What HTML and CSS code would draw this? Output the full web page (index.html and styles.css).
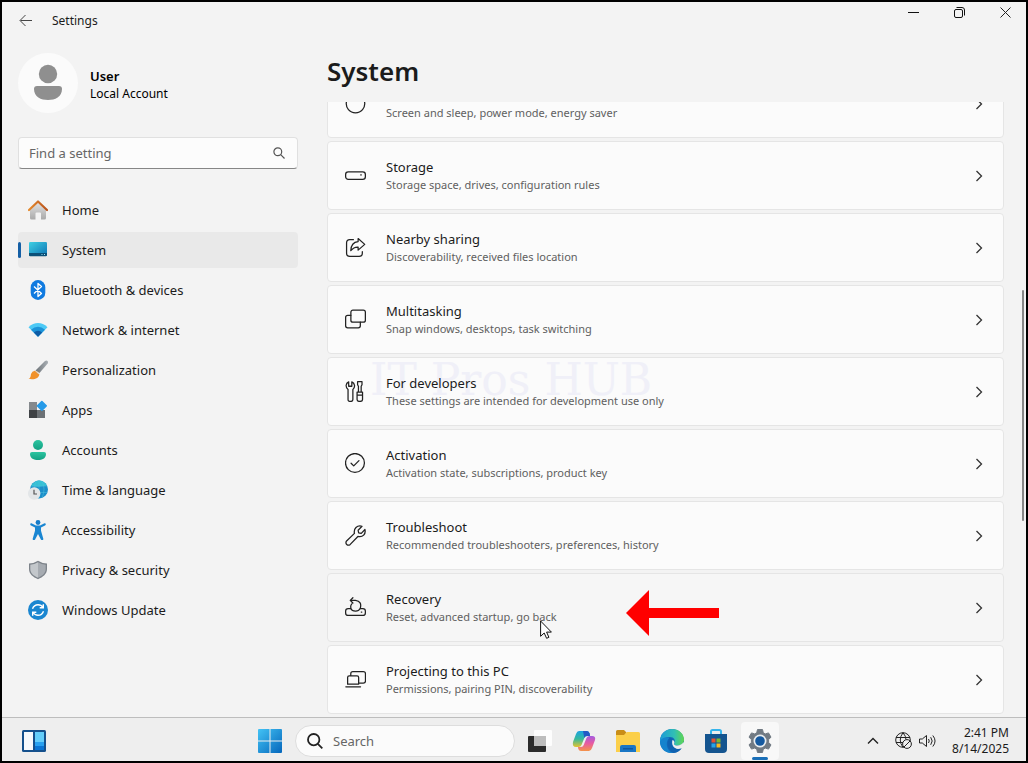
FILE: index.html
```html
<!DOCTYPE html>
<html lang="en">
<head>
    <meta charset="UTF-8">
    <meta name="viewport" content="width=device-width, initial-scale=1.0">
    <title>Settings</title>
    <link rel="stylesheet" href="styles.css">
</head>
<body>
    <div class="window">
        <header class="titlebar">
            <button class="back-btn" aria-label="Back">
                <svg width="14" height="14" viewBox="0 0 14 14" fill="none" stroke="#444"><path d="M13 6.500H1.500M6.500 1 1 6.500 6.500 12"/></svg>
            </button>
            <span class="app-name">Settings</span>
            <div class="window-controls">
                <button aria-label="Minimize">
                    <svg width="11" height="11" viewBox="0 0 11 11" fill="none" stroke="#111"><path d="M0 5.500h11"/></svg>
                </button>
                <button aria-label="Restore">
                    <svg width="11" height="11" viewBox="0 0 11 11" fill="none" stroke="#111"><rect x=".5" y="2.500" width="8" height="8" rx="1.500"/><path d="M2.500.5h5.500a2.500 2.500 0 0 1 2.500 2.500v5.500"/></svg>
                </button>
                <button aria-label="Close">
                    <svg width="11" height="11" viewBox="0 0 11 11" fill="none" stroke="#222"><path d="M.5.5l10 10M10.500.5l-10 10"/></svg>
                </button>
            </div>
        </header>

        <div class="content">
            <aside class="sidebar">
                <div class="account">
                    <svg class="avatar" viewBox="0 0 60 60"><circle cx="30" cy="30" r="30" fill="#fbfbfb"/><circle cx="30" cy="21" r="9.200" fill="#8f8f8f"/><path d="M19 33h22q3 0 3 3c0 8-7 11-14 11s-14-3-14-11q0-3 3-3z" fill="#8f8f8f"/></svg>
                    <div class="account-text">
                        <div class="account-name">User</div>
                        <div class="account-type">Local Account</div>
                    </div>
                </div>

                <div class="search-box">
                    <input type="search" placeholder="Find a setting" aria-label="Find a setting">
                    <svg width="12" height="12" viewBox="0 0 12 12" fill="none" stroke="#555" stroke-width="1.200"><circle cx="4.800" cy="4.800" r="3.900"/><path d="M7.700 7.700l3.800 3.800"/></svg>
                </div>

                <nav class="nav">
                    <a href="#home">
                        <svg viewBox="0 0 20 20"><defs><linearGradient id="wall" x2="0" y2="1"><stop stop-color="#e4e4e4"/><stop offset="1" stop-color="#a9a9a9"/></linearGradient><linearGradient id="roof"><stop stop-color="#e58a2c"/><stop offset="1" stop-color="#b9531c"/></linearGradient></defs><path d="M2 8.500 10 2l8 6.500V18q0 1.500-1.500 1.500H13v-6q0-1-1-1H8.500q-1 0-1 1v6h-4Q2 19.500 2 18z" fill="url(#wall)"/><path d="M1 10 10 1.500l9 8.500" fill="none" stroke="url(#roof)" stroke-width="2.200" stroke-linecap="round" stroke-linejoin="round"/></svg>
                        Home
                    </a>
                    <a href="#system" class="active" aria-current="page">
                        <svg viewBox="0 0 20 20"><defs><linearGradient id="screen" x2="1" y2="1"><stop stop-color="#3fd0e3"/><stop offset="1" stop-color="#0c73b4"/></linearGradient></defs><rect x="1" y="2" width="18" height="14" rx="1.200" fill="url(#screen)"/><path d="M1 13h18v2q0 1.200-1.200 1.200H2.200Q1 16.200 1 15z" fill="#0b5078"/><path d="M13.500 14.500h1m1.500 0h1" stroke="#9fe2f5"/></svg>
                        System
                    </a>
                    <a href="#bluetooth">
                        <svg viewBox="0 0 20 20"><rect x="2.700" width="14.600" height="20" rx="7.300" fill="#0f7ae0"/><path d="M6 6.500l7.500 7L10 16.500v-13l3.500 3L6 13.500" fill="none" stroke="#fff" stroke-width="1.300" stroke-linejoin="round"/></svg>
                        Bluetooth &amp; devices
                    </a>
                    <a href="#network">
                        <svg viewBox="0 0 20 20"><path d="M.5 7.200Q5 3 10 3t9.500 4.200L10 16.800z" fill="#4cc9f5"/><path d="M3 9.700q3.200-3 7-3t7 3l-7 7.100z" fill="#1c93d8"/><path d="M5.800 12.500q4.200-3.600 8.400 0L10 16.800z" fill="#0d5ba5"/></svg>
                        Network &amp; internet
                    </a>
                    <a href="#personalization">
                        <svg viewBox="0 0 20 20"><defs><linearGradient id="handle"><stop stop-color="#6d7378"/><stop offset="1" stop-color="#a9afb4"/></linearGradient></defs><path d="M7.500 10.500 17 1q1.500-1 2.500 0t.2 2.400L11.500 13z" fill="url(#handle)"/><path d="M6.800 10.800q3.700.3 4.500 3.400c0 4-5.500 6-10.800 4.600 2.500-1 2-2.800 2.500-4.800q1-3 3.800-3.200z" fill="#f0912a"/><path d="M7.500 10.500l4 2.700-.8 1-3.900-3.400z" fill="#d9dcde"/></svg>
                        Personalization
                    </a>
                    <a href="#apps">
                        <svg viewBox="0 0 20 20"><path d="M1 2h8v8.500H1z" fill="#85898d"/><path d="M1 10h8v8H1z" fill="#3f4245"/><path d="M9 10h8v8H9z" fill="#6c7175"/><rect x="10" y="2" width="7.700" height="7.700" rx=".8" fill="#259ae8" transform="rotate(45 13.850 5.850)"/></svg>
                        Apps
                    </a>
                    <a href="#accounts">
                        <svg viewBox="0 0 20 20"><defs><linearGradient id="person" x2="0" y2="1"><stop stop-color="#2cc4a0"/><stop offset="1" stop-color="#13a183"/></linearGradient></defs><circle cx="10" cy="5" r="5" fill="url(#person)"/><path d="M4 12h12q2 0 2 2c0 4.500-4 6-8 6s-8-1.500-8-6q0-2 2-2z" fill="url(#person)"/></svg>
                        Accounts
                    </a>
                    <a href="#time">
                        <svg viewBox="0 0 20 20"><circle cx="11" cy="9.500" r="9" fill="#1b8ec9"/><path d="M3 6q3.500-5.500 8-5.500 5 0 8 5-8 2-16 .5z" fill="#35c0d4"/><path d="M11 .5v18M3 6h16M8 1.200Q5 9 9 17M14 1q4 8 0 17M3 12.500h16" fill="none" stroke="#4fc0dd" stroke-width=".5"/><circle cx="6.200" cy="13.500" r="6.200" fill="#e3e6e8"/><path d="M6 9.800v4.200h3" fill="none" stroke="#555" stroke-width="1.200"/></svg>
                        Time &amp; language
                    </a>
                    <a href="#accessibility">
                        <svg viewBox="0 0 20 20"><circle cx="10" cy="2.500" r="2.400" fill="#157cc9"/><path d="M3.500 3.300 8 5.500h4l4.500-2.200q1.300-.2 1.300 1 0 .7-.8 1.100l-4 2.100v3.200l2.300 8q.1 1.300-1 1.500-1 .1-1.400-.8L10 14l-2.900 5.400q-.5.900-1.400.8-1.100-.2-1-1.500l2.300-8V7.500l-4-2.100q-.8-.4-.8-1.100 0-1.200 1.300-1z" fill="#1a86d2"/></svg>
                        Accessibility
                    </a>
                    <a href="#privacy">
                        <svg viewBox="0 0 20 20"><path d="M10 .8q4 2.700 9 2.700V9c0 5-4 8-9 10.200C5 17 1 14 1 9V3.500q5 0 9-2.700z" fill="#7d838a"/><path d="M10 2.300q3.500 2.200 7.700 2.400V9c0 4-3.200 6.800-7.700 8.700z" fill="#a6abb1"/><path d="M10 2.300Q6.500 4.500 2.300 4.700V9c0 4 3.200 6.800 7.700 8.700z" fill="#c3c7cb"/></svg>
                        Privacy &amp; security
                    </a>
                    <a href="#update">
                        <svg viewBox="0 0 20 20"><circle cx="10" cy="10" r="10" fill="#1a86d0"/><path d="M4.500 8.800Q6 4.700 10 4.700q3.300 0 5 2.800M15.500 11.200q-1.500 4.100-5.500 4.100-3.300 0-5-2.800M15.300 4.200v3.600h-3.600M4.700 15.800v-3.600h3.600" fill="none" stroke="#fff" stroke-width="1.400"/></svg>
                        Windows Update
                    </a>
                </nav>
            </aside>

            <main class="main">
                <h1>System</h1>
                <div class="cards">
                    <a class="card" href="#power">
                        <svg class="icon" viewBox="0 0 20 20"><path d="M10 0v7M5.500 2.500a8.800 8.800 0 1 0 9 0"/></svg>
                        <span class="card-text"><span class="card-title">Power</span><span class="card-desc">Screen and sleep, power mode, energy saver</span></span>
                        <svg class="chevron" viewBox="0 0 8 12"><path d="M1.500 1l5 5-5 5"/></svg>
                    </a>
                    <a class="card" href="#storage">
                        <svg class="icon" viewBox="0 0 20 20"><rect x=".6" y="6.600" width="18.800" height="7" rx="2.500"/><path d="M15 9.500h.5"/></svg>
                        <span class="card-text"><span class="card-title">Storage</span><span class="card-desc">Storage space, drives, configuration rules</span></span>
                        <svg class="chevron" viewBox="0 0 8 12"><path d="M1.500 1l5 5-5 5"/></svg>
                    </a>
                    <a class="card" href="#sharing">
                        <svg class="icon" viewBox="0 0 20 20"><path d="M8 2.500H4.500q-3 0-3 3v10q0 3 3 3h9q3 0 3-3V14"/><path d="M12.500 1.500 18.800 7l-6.300 5.500V9.600Q8.500 9.300 5.500 13q.3-8 7-8.600z"/></svg>
                        <span class="card-text"><span class="card-title">Nearby sharing</span><span class="card-desc">Discoverability, received files location</span></span>
                        <svg class="chevron" viewBox="0 0 8 12"><path d="M1.500 1l5 5-5 5"/></svg>
                    </a>
                    <a class="card" href="#multitasking">
                        <svg class="icon" viewBox="0 0 20 20"><rect x="5.600" y="1" width="13.800" height="11.600" rx="2"/><path d="M5.600 6H2.600q-2 0-2 2v8q0 2 2 2h10q2 0 2-2v-3.400"/></svg>
                        <span class="card-text"><span class="card-title">Multitasking</span><span class="card-desc">Snap windows, desktops, task switching</span></span>
                        <svg class="chevron" viewBox="0 0 8 12"><path d="M1.500 1l5 5-5 5"/></svg>
                    </a>
                    <a class="card" href="#developers">
                        <span class="watermark">IT Pros HUB</span>
                        <svg class="icon" viewBox="0 0 20 20"><path d="M3.500.8V5h3V.8C9.500 2 10 6 7.500 8v9.500q0 2-2.300 2t-2.300-2V8C.2 6 .6 2 3.500.8zM11.500 10.500h5.200v7q0 2-2.600 2t-2.600-2zM11.500 13.500h5.200M12.800 10.500V5L12 3.500V.7h4.200v2.800L15.400 5v5.500"/></svg>
                        <span class="card-text"><span class="card-title">For developers</span><span class="card-desc">These settings are intended for development use only</span></span>
                        <svg class="chevron" viewBox="0 0 8 12"><path d="M1.500 1l5 5-5 5"/></svg>
                    </a>
                    <a class="card" href="#activation">
                        <svg class="icon" viewBox="0 0 20 20"><circle cx="9.500" cy="9.500" r="9"/><path d="M5.800 9.800l2.500 2.500 5-5"/></svg>
                        <span class="card-text"><span class="card-title">Activation</span><span class="card-desc">Activation state, subscriptions, product key</span></span>
                        <svg class="chevron" viewBox="0 0 8 12"><path d="M1.500 1l5 5-5 5"/></svg>
                    </a>
                    <a class="card" href="#troubleshoot">
                        <svg class="icon" viewBox="0 0 20 20"><path d="M16.200 1.200 12.500 5l.5 2.500 2.500.5 3.500-3.700c1 4.400-2 7.700-6.700 6.600L5 18.500c-2.500 2-5.200-.8-3.500-3.300L9 8C8 3.500 11.500-.1 16.200 1.200z"/></svg>
                        <span class="card-text"><span class="card-title">Troubleshoot</span><span class="card-desc">Recommended troubleshooters, preferences, history</span></span>
                        <svg class="chevron" viewBox="0 0 8 12"><path d="M1.500 1l5 5-5 5"/></svg>
                    </a>
                    <a class="card hovered" href="#recovery">
                        <svg class="icon" viewBox="0 0 20 20"><path d="M5.500 11H3q-2.400 0-2.400 2.400v1.800q0 2.400 2.400 2.400h14q2.400 0 2.400-2.400v-1.800q0-2.400-2.400-2.400h-2.500M15.500 14.300h.5"/><path d="M5.500 11q1 2.500 4.500 2.500a5 5 0 0 0 4.500-2.500Q16.500 4 10 3.200H5M7.500.7 5 3.200l2.500 2.500M5.600 10.500Q5 8 6.500 6.500"/></svg>
                        <span class="card-text"><span class="card-title">Recovery</span><span class="card-desc">Reset, advanced startup, go back</span></span>
                        <svg class="chevron" viewBox="0 0 8 12"><path d="M1.500 1l5 5-5 5"/></svg>
                        <svg class="pointer-arrow" viewBox="0 0 94 46"><path d="M0 23 23 0v18h70v10H23v18z" fill="#f00"/></svg>
                        <svg class="cursor" viewBox="0 0 12 19"><path d="M.6 1v15.300l3.600-3.300 2.400 5.300 2.300-1-2.300-5.200h4.800z" fill="#fff" stroke="#111"/></svg>
                    </a>
                    <a class="card" href="#projecting">
                        <svg class="icon" viewBox="0 0 20 20"><path d="M5.500 6v-1.500q0-2 2-2h10q2 0 2 2v7q0 2-2 2h-4.500M4 6.500h7.500q1.500 0 1.500 1.500v6.500H2.500V8q0-1.500 1.500-1.500zM.8 17h14"/></svg>
                        <span class="card-text"><span class="card-title">Projecting to this PC</span><span class="card-desc">Permissions, pairing PIN, discoverability</span></span>
                        <svg class="chevron" viewBox="0 0 8 12"><path d="M1.500 1l5 5-5 5"/></svg>
                    </a>
                </div>
                <div class="scroll-thumb"></div>
            </main>
        </div>
    </div>

    <footer class="taskbar">
        <div class="taskbar-left">
            <button class="task-btn" aria-label="Widgets">
                <svg width="24" height="22" viewBox="0 0 24 22"><rect width="24" height="22" rx="1.500" fill="#14508c"/><path d="M2 2h9v18H2z" fill="#f6f9fc"/><path d="M13 2h9v10h-9z" fill="#63cdfa"/><path d="M13 12h9v4h-9z" fill="#28a0f0"/><path d="M13 16h9v4h-9z" fill="#0a74d4"/></svg>
            </button>
        </div>

        <div class="taskbar-center">
            <button class="task-btn" aria-label="Start">
                <svg width="24" height="24" viewBox="0 0 24 24"><defs><linearGradient id="win" gradientUnits="userSpaceOnUse" x2="24" y2="24"><stop stop-color="#43c3f5"/><stop offset="1" stop-color="#0566bb"/></linearGradient></defs><path d="M0 1q0-1 1-1h10.500v11.500H0zM12.500 0H23q1 0 1 1v10.500H12.500zM0 12.500h11.500V24H1q-1 0-1-1zM12.500 12.500H24V23q0 1-1 1H12.500z" fill="url(#win)"/></svg>
            </button>
            <div class="task-search">
                <svg width="16" height="16" viewBox="0 0 16 16" fill="none" stroke="#222" stroke-width="1.800"><circle cx="6.700" cy="6.700" r="5.700"/><path d="M10.800 10.800l4.500 4.500"/></svg>
                <input type="search" placeholder="Search" aria-label="Search">
            </div>
            <div class="task-apps">
                <button class="task-btn" aria-label="Task view">
                    <svg width="24" height="22" viewBox="0 0 24 22"><rect y="6" width="18" height="16" rx="1" fill="#2b2b2b"/><rect x="6" width="18" height="16" rx="1" fill="#fff" opacity=".85"/><path d="M6 6h12v10H6z" fill="#bdbdbd"/></svg>
                </button>
                <button class="task-btn" aria-label="Copilot">
                    <svg width="24" height="22" viewBox="0 0 24 22"><defs><linearGradient id="cpa" x2="0" y2="1"><stop stop-color="#1ba2e2"/><stop offset=".5" stop-color="#36b99c"/><stop offset="1" stop-color="#e6c32f"/></linearGradient><linearGradient id="cpb" x2="0" y2="1"><stop stop-color="#a45be0"/><stop offset=".5" stop-color="#e85ba0"/><stop offset="1" stop-color="#f4934a"/></linearGradient></defs><path d="M7 1h8q2 0 2.700 2.500L18 6h-3q-2 0-2.700 2L9.500 15q-.8 2-3 2H4Q0 17 1 12L4 4Q5 1 7 1z" fill="url(#cpa)"/><path d="M17 21H9q-2 0-2.700-2L6 17h3q2 0 2.700-2L14.500 8q.8-2 3-2H20q4 0 3 4l-3 8q-1 3-3 3z" fill="url(#cpb)"/><path d="M11 1h4q2 0 2.700 2.500L18 6h-3q-2 0-2.700 2z" fill="#2459c5"/></svg>
                </button>
                <button class="task-btn" aria-label="File Explorer">
                    <svg width="26" height="22" viewBox="0 0 26 22"><path d="M1 1.500Q1 0 2.500 0H9l2.500 2.500L9 6H1z" fill="#c98d17"/><path d="M1 5h8l3-3h11.500Q25 2 25 3.500V22H1z" fill="#fbcf4a"/><path d="M5 22v-5q0-2 2-2h12q2 0 2 2v5z" fill="#1976c5"/><path d="M8 18h10v1.500H8z" fill="#0d57a0"/></svg>
                </button>
                <button class="task-btn" aria-label="Edge">
                    <svg width="24" height="24" viewBox="0 0 24 24"><defs><linearGradient id="edge"><stop stop-color="#1b9bd8"/><stop offset=".6" stop-color="#31bfb4"/><stop offset="1" stop-color="#62d74f"/></linearGradient></defs><circle cx="12" cy="12" r="12" fill="#1268b8"/><path d="M0 11C1 4 6 0 12 0c7 0 12 5 12 10.500 0 4-3 6-6.500 6-3 0-4-1-3.300-2.200 1.800-3-.2-6.300-4.200-6.300-4.500 0-8 2-10 5z" fill="url(#edge)"/><path d="M14.200 14.300c-.7 1.200.3 2.200 3.300 2.200 2.500 0 4.800-1.200 5.900-3.400l1.600 3-3 4c-2 1.500-5 .5-7-1-2.500-1.800-3.500-5-2.500-8 1.500.5 2.300 1.800 1.700 3.200z" fill="#eee"/><path d="M9.500 9C5 12 6 22 13.500 23.900 3 25-1 16 .3 12 2 8.500 6.500 7.500 9.500 9z" fill="#1583cd"/><path d="M13.500 23.900c3.500-.1 6.500-1.900 8.300-4.600-4 1.700-8.300.7-10-3.300-1-2.300-.4-4.500.7-5.300-1-1.300-2-1.700-3-1.700-3.500 5-1.500 12 4 14.900z" fill="#1062b0"/></svg>
                </button>
                <button class="task-btn" aria-label="Microsoft Store">
                    <svg width="24" height="24" viewBox="0 0 24 24"><path d="M7 6V2.500Q7 1 8.500 1h7Q17 1 17 2.500V6" fill="none" stroke="#35b4ec" stroke-width="2"/><path d="M1 5h22v15q0 4-4 4H5q-4 0-4-4z" fill="#14548f"/><path d="M7.500 9.500h4v4h-4z" fill="#e8502f"/><path d="M12.500 9.500h4v4h-4z" fill="#7cb82f"/><path d="M7.500 14.500h4v4h-4z" fill="#27a3e8"/><path d="M12.500 14.500h4v4h-4z" fill="#f9b91e"/></svg>
                </button>
                <button class="task-btn running" aria-label="Settings">
                    <svg width="24" height="24" viewBox="0 0 24 24"><path d="M9.500.5h5l.8 3.300 2 1.100 3.200-1 2.500 4.300L20.600 10.500v3l2.400 2.300-2.500 4.300-3.200-1-2 1.100-.8 3.300h-5l-.8-3.300-2-1.100-3.200 1L1 15.800l2.400-2.300v-3L1 8.200l2.500-4.300 3.200 1 2-1.100z" fill="#717a83" stroke="#717a83" stroke-linejoin="round"/><circle cx="12" cy="12" r="6.500" fill="#e9edf0"/><circle cx="12" cy="12" r="4.800" fill="#15599f"/></svg>
                </button>
            </div>
        </div>

        <div class="tray">
            <button aria-label="Show hidden icons">
                <svg width="12" height="8" viewBox="0 0 12 8" fill="none" stroke="#222" stroke-width="1.400"><path d="M1 6.500 6 1.500l5 5"/></svg>
            </button>
            <button class="tray-status" aria-label="Network and volume">
                <svg width="17" height="17" viewBox="0 0 17 17" fill="none" stroke="#222"><circle cx="8" cy="8" r="7.300"/><path d="M1 5.500h14M1 10.500h8M8 .7Q2.500 8 8 15.300M8 .7q3 3.500 3 7"/><circle cx="12" cy="12" r="4.400" fill="#eee"/><path d="M9 15l6-6"/></svg>
                <svg width="17" height="14" viewBox="0 0 17 14" fill="none" stroke="#222"><path d="M.5 5v4h2.800L7.500 12.500v-11L3.300 5zM9.500 5q1.500 2 0 4M11.700 3.200q3 3.800 0 7.600M13.800 1.500q4.500 5.500 0 11"/></svg>
            </button>
            <button class="clock"><span>2:41 PM</span><span>8/14/2025</span></button>
        </div>
    </footer>
</body>
</html>
```
FILE: styles.css
```css
* {
    box-sizing: border-box;
}
body {
    margin: 0;
    height: 100vh;
    display: flex;
    flex-direction: column;
    border: 2px solid #000;
    background-color: #f3f3f3;
    color: #1b1b1b;
    font-family: "Noto Sans", "Open Sans", sans-serif;
    font-size: 13px;
    line-height: 18px;
    overflow: hidden;
}
button {
    display: flex;
    align-items: center;
    justify-content: center;
    padding: 0;
    border: none;
    background: none;
    color: inherit;
    font: inherit;
}
a {
    color: inherit;
    text-decoration: none;
}
input {
    flex: 1;
    min-width: 0;
    padding: 0;
    border: none;
    outline: none;
    background: none;
    color: #1b1b1b;
    font: inherit;
}
input::placeholder {
    color: #666;
}

.window {
    flex: 1;
    min-height: 0;
    display: flex;
    flex-direction: column;
}
.titlebar {
    display: flex;
    align-items: center;
    height: 38px;
    padding-left: 16px;
}
.back-btn {
    width: 16px;
    height: 20px;
}
.app-name {
    margin-left: 18px;
    font-size: 12px;
}
.window-controls {
    display: flex;
    align-self: flex-start;
    gap: 4px;
    margin-left: auto;
}
.window-controls button {
    width: 42px;
    height: 20px;
}

.content {
    flex: 1;
    min-height: 0;
    display: flex;
}
.sidebar {
    width: 296px;
    flex-shrink: 0;
    padding: 13px 0 0 16px;
}
.account {
    display: flex;
    align-items: center;
    gap: 12px;
    color: #000;
}
.account-text {
    padding-top: 4px;
}
.avatar {
    width: 60px;
    height: 60px;
}
.account-name {
    font-weight: 600;
}
.account-type {
    font-size: 12px;
}
.search-box {
    display: flex;
    align-items: center;
    height: 32px;
    margin: 24px 0 23px;
    padding: 0 12px 0 10px;
    border: 1px solid #e0e0e0;
    border-bottom-color: #868686;
    border-radius: 4px;
    background-color: #fcfcfc;
}
.nav {
    display: flex;
    flex-direction: column;
    gap: 4px;
}
.nav a {
    position: relative;
    display: flex;
    align-items: center;
    gap: 14px;
    height: 36px;
    padding-left: 10px;
    border-radius: 4px;
}
.nav svg {
    width: 20px;
    height: 20px;
}
.nav .active {
    background-color: #e9e9e9;
}
.nav .active::before {
    content: "";
    position: absolute;
    left: 0;
    width: 3px;
    height: 16px;
    border-radius: 2px;
    background-color: #155fa5;
}

.main {
    position: relative;
    flex: 1;
    min-width: 0;
    display: flex;
    flex-direction: column;
    padding: 12px 22px 0 29px;
}
h1 {
    margin: 0 0 12px;
    font-size: 26px;
    line-height: 38px;
    font-weight: 600;
}
.cards {
    flex: 1;
    min-height: 0;
    display: flex;
    flex-direction: column;
    justify-content: flex-end;
    gap: 3px;
    padding-bottom: 3px;
    overflow: hidden;
}
.card {
    position: relative;
    flex-shrink: 0;
    display: flex;
    align-items: center;
    height: 69px;
    padding: 0 20px 0 17px;
    border: 1px solid #e5e5e5;
    border-radius: 4px;
    background-color: #fbfbfb;
}
.card.hovered {
    background-color: #f6f6f6;
}
.icon {
    width: 21px;
    height: 21px;
    margin-right: 20px;
    fill: none;
    stroke: #222;
    stroke-width: 1.2;
    stroke-linejoin: round;
    stroke-linecap: round;
}
.card-text {
    position: relative;
    flex: 1;
    display: flex;
    flex-direction: column;
}
.card-desc {
    color: #606060;
    font-size: 11px;
}
.chevron {
    width: 8px;
    height: 12px;
    fill: none;
    stroke: #333;
    stroke-width: 1.3;
}
.watermark {
    position: absolute;
    left: 42px;
    top: -2px;
    color: #f0f0f8;
    font-family: "DejaVu Serif", serif;
    font-size: 44px;
    line-height: 48px;
    white-space: nowrap;
}
.pointer-arrow {
    position: absolute;
    left: 298px;
    top: 16px;
    width: 94px;
    height: 46px;
}
.cursor {
    position: absolute;
    left: 212px;
    top: 46px;
    width: 12px;
    height: 19px;
}
.scroll-thumb {
    position: absolute;
    top: 37%;
    right: 2px;
    width: 2px;
    height: 34%;
    border-radius: 1px;
    background-color: #868686;
}

.taskbar {
    display: grid;
    grid-template-columns: 1fr auto 1fr;
    align-items: center;
    height: 44px;
    padding-top: 2px;
    border-top: 1px solid #bdbdbd;
    background-color: #eee;
}
.taskbar-left {
    padding-left: 10px;
}
.taskbar-center {
    display: flex;
    align-items: center;
    gap: 3px;
    padding-left: 2px;
}
.task-apps {
    display: flex;
}
.task-btn {
    position: relative;
    width: 44px;
    height: 40px;
}
.task-search {
    display: flex;
    align-items: center;
    gap: 10px;
    width: 220px;
    height: 32px;
    padding: 0 11px;
    border: 1px solid #ddd;
    border-radius: 16px;
    background-color: #fbfbfb;
}
.running {
    z-index: 0;
}
.running::before {
    content: "";
    position: absolute;
    inset: 1px 3px;
    z-index: -1;
    border-radius: 4px;
    background-color: #f8f8f8;
}
.running::after {
    content: "";
    position: absolute;
    bottom: 1px;
    width: 16px;
    height: 3px;
    border-radius: 2px;
    background-color: #1a6fb8;
}
.tray {
    display: flex;
    align-items: center;
    justify-content: flex-end;
    gap: 16px;
    padding-right: 17px;
}
.tray-status {
    gap: 7px;
}
.clock {
    flex-direction: column;
    align-items: flex-end;
    font-size: 12px;
    line-height: 16px;
}
```
